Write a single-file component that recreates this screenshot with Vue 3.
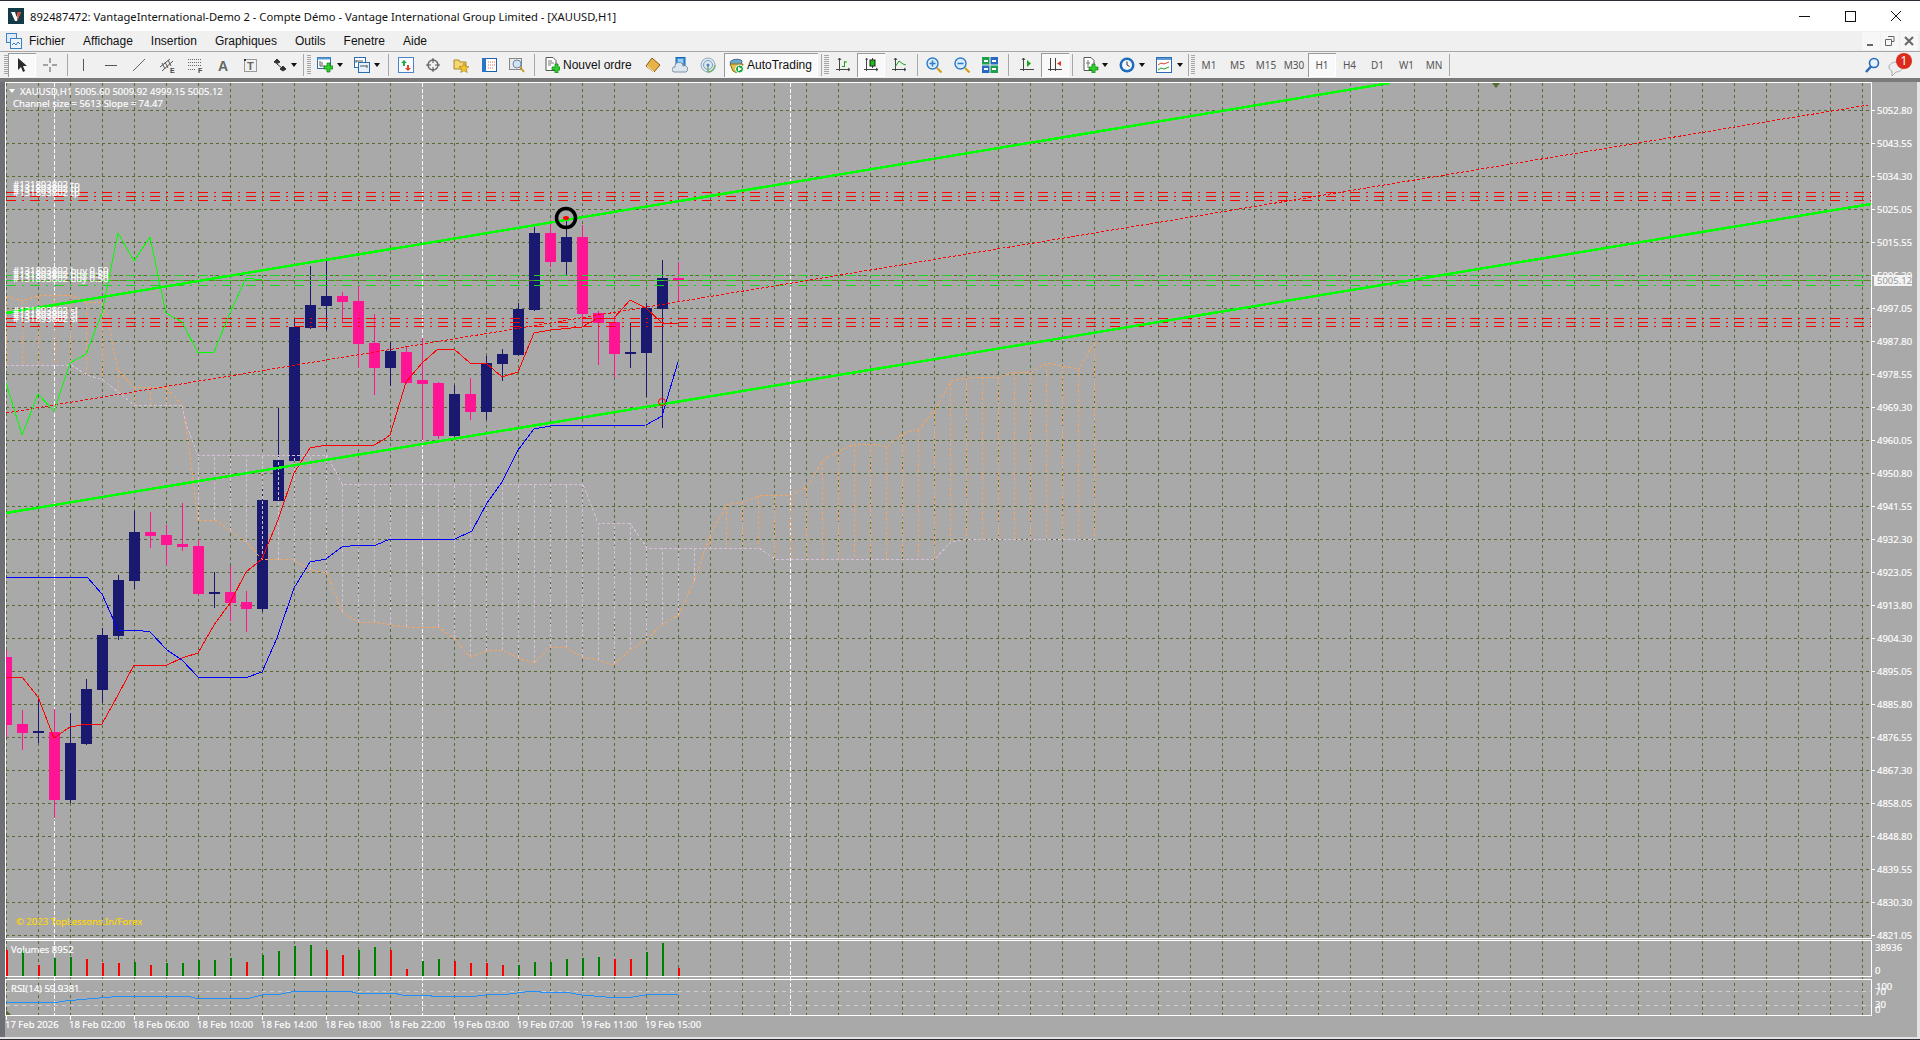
<script setup>
const menus = ['Fichier', 'Affichage', 'Insertion', 'Graphiques', 'Outils', 'Fenetre', 'Aide'];

// toolbar icons, 16x16 box
const icons = {
  cursor: '<path d="M4 1v12l3-3 2 5 2-1-2-5h4z" fill="#2b2b2b"/>',
  cross: '<path d="M8 1v5M8 10v5M1 8h5M10 8h5" stroke="#555" fill="none"/>',
  vline: '<path d="M8.5 2v12" stroke="#555"/>',
  hline: '<path d="M2 8.5h12" stroke="#555"/>',
  trend: '<path d="M2 14L14 2" stroke="#666"/>',
  equi: '<path d="M1 10L11 2M3 14L14 4M3 6l3 6M6 5l3 6M9 3l3 6" stroke="#555" fill="none"/><text x="11" y="16" font-size="7" font-weight="700" font-family="Liberation Sans" fill="#444">E</text>',
  fibo: '<path d="M1 2.5h13M1 5.5h13M1 8.5h13M1 12.5h8" stroke="#666" stroke-dasharray="1 1"/><text x="11" y="16" font-size="7" font-weight="700" font-family="Liberation Sans" fill="#444">F</text>',
  letter: '<text x="3" y="14" font-size="14" font-weight="700" font-family="Liberation Sans" fill="#666">A</text>',
  textbox: '<rect x="1.5" y="2.5" width="12" height="12" fill="none" stroke="#444" stroke-dasharray="1 1"/><path d="M1 2h2v2H1z" fill="#333"/><text x="4" y="13" font-size="11" font-weight="700" font-family="Liberation Sans" fill="#666">T</text>',
  arrows: '<path d="M5 2l3 3-3 1.5L2 5zM11 9l3 3-3 2-3-2zM5 7l5 4" fill="#333" stroke="#333"/>',
  newchart: '<rect x="0.5" y="0.5" width="13" height="11" fill="#fff" stroke="#2b6cb0"/><rect x="0.5" y="0.5" width="13" height="2" fill="#5b9bd5"/><path d="M3 4v5h5M5 5v3" stroke="#555" fill="none"/><path d="M8 6h3V3h3v3h3v3h-3v3h-3V9H8z" transform="translate(-1 3)" fill="#2fd12f" stroke="#0a7a0a" stroke-width=".7"/>',
  profile: '<rect x="0.5" y="0.5" width="11" height="10" fill="#fff" stroke="#2b6cb0"/><rect x="4.5" y="5.5" width="11" height="10" fill="#e6f0fa" stroke="#2b6cb0"/><path d="M2 4h7M6 9h7M2 3v3M13 8v3" stroke="#555" fill="none"/>',
  market: '<rect x="0.5" y="0.5" width="15" height="15" fill="#f7fbff" stroke="#4a86c5"/><path d="M6 3l3 3H7v3H5V6H3z" fill="#1fae3a"/><path d="M10 14l3-3h-2V8H9v3H7z" fill="#e2452b"/>',
  target: '<circle cx="8" cy="8" r="5" fill="none" stroke="#666" stroke-width="1.4"/><path d="M8 1v5M8 10v5M1 8h5M10 8h5" stroke="#555"/>',
  folder: '<path d="M1 3h5l1 2h6v7H1z" fill="#f4d774" stroke="#a98a1e"/><path d="M11 6l1.5 3.3 3.5.4-2.6 2.3.8 3.5-3.2-1.8-3.2 1.8.8-3.5L6 9.7l3.5-.4z" fill="#f2c230" stroke="#a07a10" stroke-width=".6"/>',
  navigator: '<rect x="1.5" y="1.5" width="14" height="13" fill="#fff" stroke="#1d62ad"/><rect x="1" y="1" width="4" height="14" fill="#2a75c7"/><path d="M7 5h7M7 8h7M7 11h5" stroke="#e46a5c" stroke-dasharray="1 1"/>',
  tester: '<rect x="0.5" y="1.5" width="12" height="11" fill="#e9e9e9" stroke="#888"/><circle cx="8" cy="7" r="4" fill="#cfe2f3" stroke="#6c8ba8"/><path d="M11 10l4 5" stroke="#c99a1e" stroke-width="2"/>',
  order: '<path d="M2 .5h7l3 3v10H2z" fill="#fff" stroke="#555"/><path d="M4 4h4M4 6h6M4 8h3" stroke="#777"/><path d="M8 10h3V7h3v3h2v3h-2v3h-3v-3H8z" fill="#2fd12f" stroke="#0a7a0a" stroke-width=".7"/>',
  book: '<path d="M7 1l8 7-6 7-8-6z" fill="#e8b44a" stroke="#8a5a16"/><path d="M2 9l7 6" stroke="#fff4c8"/>',
  cloud: '<rect x="4" y="0.5" width="9" height="9" fill="#3f9be8" stroke="#1d62ad"/><path d="M6 3h5M6 5h5" stroke="#fff"/><path d="M2 15a2.5 2.5 0 0 1 1-5 4 4 0 0 1 8-1 3 3 0 0 1 3 6z" fill="#dde6ee" stroke="#7c8ea3"/>',
  signal: '<circle cx="8" cy="8" r="7" fill="#dfe7ee" stroke="#8fa8bf"/><circle cx="8" cy="8" r="4.5" fill="none" stroke="#7a9ec4"/><path d="M8 8v7c4 0 7-3 7-7" fill="none" stroke="#6fb36f" stroke-width="1.5"/><circle cx="8" cy="8" r="1.5" fill="#4a86c5"/>',
  auto: '<path d="M2 6c0-4 10-5 12-2l-1 4-2 1H5z" fill="#6fa7c9" stroke="#3d6e8e"/><path d="M2 7h13l-2 7-4 2-4-2z" fill="#e5c04a" stroke="#8a6d14"/><circle cx="11.5" cy="12" r="4" fill="#11a63c" stroke="#fff"/><path d="M10 9.5l4 2.500-4 2.500z" fill="#fff"/>',
  bars: '<path d="M4.5 1v13M1 12.5h14M3 3l1.500-2 1.500 2M13 11l2 1.500-2 1.500" stroke="#444" fill="none"/><path d="M9.5 4v6M7 9.500h2.500M9.500 5H12" stroke="#1aa41a" fill="none"/>',
  candles: '<path d="M3.5 1v13M1 12.5h14M3 3l.5-2 1 2M13 11l2 1.500-2 1.500M9.500 1v10" stroke="#444" fill="none"/><rect x="7" y="3" width="5" height="6" fill="#15c415" stroke="#222"/>',
  line: '<path d="M4.5 1v13M1 12.5h14M3 3l1.500-2 1.500 2M13 11l2 1.500-2 1.500" stroke="#444" fill="none"/><path d="M4 10l4-6 4 3 3 1" stroke="#1aa41a" fill="none"/>',
  zoomin: '<circle cx="6.5" cy="6.5" r="5.5" fill="#d8ecfb" stroke="#2e7cc4" stroke-width="1.4"/><path d="M3.500 6.500h6M6.500 3.500v6" stroke="#2e7cc4" stroke-width="1.5"/><path d="M11 11l4.500 4.500" stroke="#d39e1c" stroke-width="2.2"/>',
  zoomout: '<circle cx="6.5" cy="6.5" r="5.5" fill="#d8ecfb" stroke="#2e7cc4" stroke-width="1.4"/><path d="M3.500 6.500h6" stroke="#2e7cc4" stroke-width="1.5"/><path d="M11 11l4.500 4.500" stroke="#d39e1c" stroke-width="2.2"/>',
  tile: '<rect x="0" y="0" width="7.5" height="7.5" fill="#1f9e4b"/><rect x="8.5" y="0" width="7.5" height="7.5" fill="#2769c4"/><rect x="0" y="8.5" width="7.5" height="7.5" fill="#2769c4"/><rect x="8.5" y="8.5" width="7.5" height="7.5" fill="#1f9e4b"/><path d="M2 3h4v2H2zM10 3h4v2h-4zM2 11h4v2H2zM10 11h4v2h-4z" fill="#fff"/>',
  scroll: '<path d="M4.5 1v13M1 12.5h14M3 3l1.500-2 1.500 2" stroke="#444" fill="none"/><path d="M8 3v7l4-3.500z" fill="#1aa41a"/>',
  shift: '<path d="M3.5 1v13M1 12.5h14M8.500 1v13" stroke="#444" fill="none"/><path d="M14 4v5l-4-2.500z" fill="#dc3a20"/>',
  template: '<path d="M1 .5h7l3 3v10H1z" fill="#fff" stroke="#555"/><path d="M3 6h4M5 3v8" stroke="#777"/><path d="M6 10h3V7h3v3h3v3h-3v3H9v-3H6z" fill="#2fd12f" stroke="#0a7a0a" stroke-width=".7"/>',
  clock: '<circle cx="8" cy="8" r="7.5" fill="#1c6cbd"/><circle cx="8" cy="8" r="5" fill="#f3f7fb"/><path d="M8 4.500V8l2.500 1.500" stroke="#333" fill="none"/>',
  indicators: '<rect x="0.5" y="0.5" width="15" height="15" fill="#fff" stroke="#2b6cb0"/><rect x="1" y="1" width="14" height="2" fill="#5b9bd5"/><path d="M2 8l3-2 3 1 5-2" stroke="#d8452c" fill="none"/><path d="M2 13l3-2 3 1 5-2" stroke="#1aa41a" fill="none"/>',
};

const tools = [
  { k: 'grip', w: 4 }, { k: 'btn', w: 28, icon: 'cursor', on: true }, { k: 'btn', w: 28, icon: 'cross' }, { k: 'sep', w: 5 },
  { k: 'btn', w: 28, icon: 'vline' }, { k: 'btn', w: 28, icon: 'hline' }, { k: 'btn', w: 28, icon: 'trend' }, { k: 'btn', w: 28, icon: 'equi' },
  { k: 'btn', w: 28, icon: 'fibo' }, { k: 'btn', w: 28, icon: 'letter' }, { k: 'btn', w: 28, icon: 'textbox' },
  { k: 'dd', w: 34, icon: 'arrows', pad: 7, gap: 3 }, { k: 'sep', w: 8 }, { k: 'grip', w: 4 },
  { k: 'dd', w: 34, icon: 'newchart', pad: 6, gap: 4 }, { k: 'dd', w: 38, icon: 'profile', pad: 9, gap: 4 }, { k: 'sep', w: 9 },
  { k: 'btn', w: 27, icon: 'market' }, { k: 'btn', w: 28, icon: 'target' }, { k: 'btn', w: 28, icon: 'folder' },
  { k: 'btn', w: 28, icon: 'navigator' }, { k: 'btn', w: 28, icon: 'tester' }, { k: 'sep', w: 6 },
  { k: 'txt', w: 103, icon: 'order', pad: 7, text: 'Nouvel ordre' }, { k: 'btn', w: 26, icon: 'book' }, { k: 'btn', w: 28, icon: 'cloud' },
  { k: 'btn', w: 28, icon: 'signal' }, { k: 'gap', w: 2 }, { k: 'txt', w: 94, icon: 'auto', pad: 4, text: 'AutoTrading', on: true }, { k: 'sep', w: 6 },
  { k: 'grip', w: 5 }, { k: 'btn', w: 28, icon: 'bars' }, { k: 'btn', w: 28, icon: 'candles', on: true }, { k: 'btn', w: 28, icon: 'line' }, { k: 'sep', w: 8 },
  { k: 'btn', w: 26, icon: 'zoomin' }, { k: 'btn', w: 30, icon: 'zoomout' }, { k: 'btn', w: 26, icon: 'tile' }, { k: 'sep', w: 10 },
  { k: 'btn', w: 28, icon: 'scroll' }, { k: 'btn', w: 28, icon: 'shift', on: true }, { k: 'sep', w: 6 },
  { k: 'dd', w: 34, icon: 'template', pad: 8, gap: 3 }, { k: 'dd', w: 37, icon: 'clock', pad: 10, gap: 4 }, { k: 'dd', w: 39, icon: 'indicators', pad: 10, gap: 5 }, { k: 'sep', w: 6 },
  { k: 'grip', w: 4 },
  { k: 'tf', w: 28, text: 'M1' }, { k: 'tf', w: 29, text: 'M5' }, { k: 'tf', w: 28, text: 'M15' }, { k: 'tf', w: 28, text: 'M30' },
  { k: 'tf', w: 28, text: 'H1', on: true }, { k: 'tf', w: 27, text: 'H4' }, { k: 'tf', w: 29, text: 'D1' }, { k: 'tf', w: 29, text: 'W1' }, { k: 'tf', w: 26, text: 'MN' },
  { k: 'sep', w: 4 },
];

// chart: coordinates are page pixels, the svg viewBox starts at y=82
const L = 6, R = 1871, TOP = 83, BOT = 938;

const vGrid = [];
for (let x = L; x <= R; x += 32) vGrid.push(x);

const prices = ['5052.80', '5043.55', '5034.30', '5025.05', '5015.55', '5006.30', '4997.05', '4987.80', '4978.55', '4969.30', '4960.05', '4950.80', '4941.55',
  '4932.30', '4923.05', '4913.80', '4904.30', '4895.05', '4885.80', '4876.55', '4867.30', '4858.05', '4848.80', '4839.55', '4830.30', '4821.05'];
const priceRows = prices.map((p, i) => ({ p, y: 110 + 33 * i }));

const times = ['17 Feb 2026', '18 Feb 02:00', '18 Feb 06:00', '18 Feb 10:00', '18 Feb 14:00', '18 Feb 18:00', '18 Feb 22:00', '19 Feb 03:00', '19 Feb 07:00', '19 Feb 11:00', '19 Feb 15:00'];

// b = bull (navy), s = bear (pink): type, body top, body bottom, wick top, wick bottom
const raw = [
  ['s', 657, 725, 650, 737], ['s', 724, 733, 710, 750], ['b', 731, 733, 700, 743], ['s', 732, 800, 709, 818], ['b', 743, 800, 713, 803],
  ['b', 689, 744, 679, 745], ['b', 635, 690, 628, 703], ['b', 580, 636, 575, 640], ['b', 532, 581, 511, 589], ['s', 532, 536, 512, 548],
  ['s', 535, 545, 525, 565], ['s', 544, 547, 503, 551], ['s', 546, 594, 539, 595], ['b', 592, 594, 572, 608], ['s', 592, 603, 566, 621],
  ['s', 602, 609, 591, 632], ['b', 500, 609, 488, 612], ['b', 460, 501, 408, 501], ['b', 327, 461, 318, 461], ['b', 305, 328, 266, 329],
  ['b', 296, 306, 261, 330], ['s', 296, 302, 292, 322], ['s', 301, 344, 286, 368], ['s', 343, 368, 314, 395], ['b', 351, 368, 342, 386],
  ['s', 352, 383, 346, 384], ['s', 380, 384, 338, 440], ['s', 383, 436, 382, 439], ['b', 394, 436, 385, 438], ['s', 394, 412, 378, 420],
  ['b', 363, 412, 356, 420], ['b', 354, 364, 349, 381], ['b', 309, 355, 303, 356], ['b', 233, 310, 227, 311], ['s', 233, 262, 220, 267],
  ['b', 237, 262, 220, 276], ['s', 237, 314, 225, 325], ['s', 313, 323, 311, 365], ['s', 322, 354, 316, 378], ['b', 352, 354, 323, 368],
  ['b', 308, 353, 303, 397], ['b', 278, 309, 260, 428], ['s', 278, 281, 262, 302],
];
const candles = raw.map((c, i) => ({ x: L + i * 16, bear: c[0] === 's', top: c[1], bot: c[2], wt: c[3], wb: c[4] }));

const pts = (a) => a.map((p) => p.join(',')).join(' ');

const tenkan = pts([[6, 677], [22, 677], [38, 697], [54, 738], [70, 727], [87, 724], [102, 724], [118, 695], [134, 665], [167, 665], [182, 658], [198, 653], [214, 625], [230, 603], [246, 572], [262, 559], [278, 520], [294, 473], [310, 448], [326, 445], [374, 445], [383, 440], [390, 435], [400, 402], [406, 382], [422, 363], [438, 349], [454, 349], [470, 363], [486, 363], [502, 377], [518, 372], [534, 333], [550, 330], [582, 327], [598, 318], [614, 318], [630, 300], [646, 308], [662, 323], [678, 323]]);
const kijun = pts([[6, 577], [87, 577], [102, 594], [118, 630], [143, 631], [150, 632], [167, 650], [182, 660], [198, 677], [248, 677], [262, 672], [277, 638], [294, 588], [310, 562], [326, 559], [342, 547], [358, 545], [376, 545], [390, 539], [455, 539], [472, 531], [487, 503], [502, 482], [518, 450], [534, 429], [550, 426], [646, 425], [662, 416], [678, 362]]);
const chikou = pts([[6, 383], [22, 435], [38, 394], [54, 411], [70, 363], [86, 354], [102, 313], [118, 233], [134, 261], [150, 237], [166, 313], [182, 322], [198, 353], [214, 352], [230, 313], [246, 278], [262, 280]]);

const spanA = [[6, 296], [22, 301], [38, 296], [54, 295], [70, 295], [86, 302], [102, 303], [108, 320], [118, 370], [134, 387], [166, 387], [182, 405], [188, 440], [198, 520], [215, 520], [247, 543], [262, 559], [293, 560], [310, 570], [327, 573], [342, 612], [358, 622], [374, 622], [390, 625], [407, 627], [438, 627], [453, 637], [470, 657], [487, 651], [502, 650], [518, 658], [534, 663], [550, 647], [567, 648], [582, 657], [598, 660], [613, 665], [630, 650], [647, 640], [660, 626], [679, 615], [695, 579], [711, 533], [727, 505], [743, 502], [759, 496], [775, 495], [791, 495], [807, 487], [823, 460], [839, 451], [855, 444], [871, 444], [887, 447], [903, 433], [919, 429], [935, 410], [951, 381], [967, 378], [983, 377], [999, 377], [1015, 372], [1031, 372], [1047, 363], [1063, 366], [1079, 369], [1095, 341]];
const spanB = [[6, 365], [71, 365], [87, 375], [103, 380], [118, 392], [134, 405], [182, 405], [187, 427], [198, 455], [327, 455], [342, 484], [583, 484], [598, 523], [630, 523], [647, 548], [759, 548], [775, 559], [935, 559], [951, 542], [967, 539], [1095, 539]];

function at(line, x) {
  for (let i = 1; i < line.length; i++) {
    if (x <= line[i][0]) {
      const [x0, y0] = line[i - 1], [x1, y1] = line[i];
      return y0 + (y1 - y0) * (x - x0) / (x1 - x0);
    }
  }
  return line[line.length - 1][1];
}

const hatch = [];
for (let x = L; x <= 1095; x += 16) {
  const a = at(spanA, x), b = at(spanB, x);
  hatch.push({ x: x + 0.5, a, b, orange: a < b });
}
const spanAPts = pts(spanA), spanBPts = pts(spanB);

const levels = [192, 196, 200, 318, 322, 326];
const greens = [275, 285];

const vols = [[950, 1], [950, 0], [965, 1], [958, 0], [957, 0], [959, 1], [963, 1], [963, 1], [962, 0], [965, 1], [963, 0], [963, 0], [960, 0], [960, 0], [958, 0], [962, 1], [955, 0], [951, 0], [946, 0], [945, 0], [950, 1], [955, 1], [950, 0], [947, 0], [950, 1], [969, 1], [961, 0], [959, 0], [961, 1], [963, 1], [963, 1], [965, 1], [965, 0], [962, 0], [962, 0], [959, 0], [958, 0], [957, 0], [959, 1], [959, 1], [952, 0], [943, 0], [968, 1]]
  .map((v, i) => ({ x: L + i * 16, y: v[0], red: !!v[1] }));

const rsi = pts([[6, 1002], [48, 1002], [54, 1003], [65, 1001], [87, 999], [111, 997], [127, 996], [187, 996], [195, 998], [250, 998], [262, 995], [281, 994], [296, 991], [349, 991], [356, 993], [368, 994], [383, 993], [393, 993], [402, 995], [427, 995], [436, 997], [446, 996], [477, 996], [485, 995], [509, 994], [533, 991], [548, 993], [565, 992], [582, 995], [606, 997], [633, 997], [645, 995], [655, 994], [669, 994], [678, 995]]);

const tradeLabels = [
  { x: 13, ys: [188, 192, 196], text: '#131893802 tp' },
  { x: 13, ys: [274, 278, 282], text: '#131893802 buy 0.50' },
  { x: 13, ys: [314, 318, 322], text: '#131893802 sl' },
];
</script>

<template>
  <div class="terminal">
    <header class="titlebar">
      <svg class="app-logo" width="16" height="16" viewBox="0 0 16 16"><rect width="16" height="16" fill="#123b47"/><path d="M3 4h4l1.500 5L10 4h3l-4 9H7z" fill="#fff"/><path d="M9.500 4H13l-4 9z" fill="#d9412c"/></svg>
      <span class="title-text">892487472: VantageInternational-Demo 2 - Compte Démo - Vantage International Group Limited - [XAUUSD,H1]</span>
      <div class="win-controls">
        <svg width="16" height="16" viewBox="0 0 16 16"><path d="M3 8.500h11" stroke="#111"/></svg>
        <svg width="16" height="16" viewBox="0 0 16 16"><rect x="3.500" y="3.500" width="10" height="10" fill="none" stroke="#111"/></svg>
        <svg width="16" height="16" viewBox="0 0 16 16"><path d="M3 3l10 10M13 3L3 13" stroke="#111"/></svg>
      </div>
    </header>

    <nav class="menubar">
      <svg class="menu-icon" width="16" height="16" viewBox="0 0 16 16"><rect x="0.500" y="0.500" width="10" height="9" fill="#dcebfa" stroke="#3f7fc1"/><rect x="4.500" y="5.500" width="11" height="10" fill="#eef5fc" stroke="#3f7fc1"/><path d="M6 12l2-2 2 2 2-3 2 2" stroke="#3f7fc1" fill="none"/></svg>
      <span v-for="m in menus" :key="m" class="menu-item">{{ m }}</span>
      <div class="mdi-buttons">
        <span class="mdi"><svg width="10" height="10" viewBox="0 0 10 10"><path d="M1 8h6v2H1z" fill="#666"/></svg></span>
        <span class="mdi"><svg width="10" height="10" viewBox="0 0 10 10"><path d="M3 .5h6v5H7M.5 3.500h6v6h-6z" fill="none" stroke="#666"/></svg></span>
        <span class="mdi"><svg width="10" height="10" viewBox="0 0 10 10"><path d="M1 1l8 8M9 1L1 9" stroke="#666" stroke-width="2"/></svg></span>
      </div>
    </nav>

    <div class="toolbar">
      <template v-for="(t, i) in tools" :key="i">
        <span v-if="t.k === 'grip'" class="grip" :style="{ width: t.w + 'px' }"></span>
        <span v-else-if="t.k === 'sep'" class="sep" :style="{ width: t.w + 'px' }"></span>
        <span v-else-if="t.k === 'gap'" :style="{ width: t.w + 'px' }"></span>
        <span v-else-if="t.k === 'tf'" class="btn tf" :class="{ on: t.on }" :style="{ width: t.w + 'px' }">{{ t.text }}</span>
        <span v-else-if="t.k === 'txt'" class="btn txt" :class="{ on: t.on }" :style="{ width: t.w + 'px', paddingLeft: t.pad + 'px' }">
          <svg class="ico" width="16" height="16" viewBox="0 0 16 16" v-html="icons[t.icon]"></svg>
          <span>{{ t.text }}</span>
        </span>
        <span v-else-if="t.k === 'dd'" class="btn dd" :style="{ width: t.w + 'px', paddingLeft: t.pad + 'px' }">
          <svg class="ico" width="16" height="16" viewBox="0 0 16 16" v-html="icons[t.icon]"></svg>
          <i class="caret" :style="{ marginLeft: t.gap + 'px' }"></i>
        </span>
        <span v-else class="btn" :class="{ on: t.on }" :style="{ width: t.w + 'px' }">
          <svg class="ico" width="16" height="16" viewBox="0 0 16 16" v-html="icons[t.icon]"></svg>
        </span>
      </template>
      <div class="tool-right">
        <svg width="16" height="16" viewBox="0 0 16 16"><circle cx="10" cy="6" r="4.500" fill="#e8f2fb" stroke="#2467b8" stroke-width="1.600"/><path d="M7 9.500L2 15" stroke="#2467b8" stroke-width="2.400"/></svg>
        <span class="alert">
          <svg class="bubble" width="16" height="16" viewBox="0 0 16 16"><path d="M1 6c0-3 4-5 7-5s7 2 7 5-4 5-7 5l-4 4v-5C2 9 1 8 1 6z" fill="#eee" stroke="#aaa"/></svg>
          <b class="badge">1</b>
        </span>
      </div>
    </div>

    <div class="chart-frame">
      <svg class="chart" width="1920" height="958" viewBox="0 82 1920 958">
        <defs>
          <clipPath id="main"><rect :x="L" :y="TOP" :width="R - L" :height="BOT - TOP" /></clipPath>
        </defs>

        <!-- grid -->
        <g class="grid" shape-rendering="crispEdges">
          <line v-for="x in vGrid" :key="'v' + x" :x1="x + 0.5" :x2="x + 0.5" y1="83" y2="1016" />
          <line v-for="r in priceRows" :key="'h' + r.y" :x1="L" :x2="R" :y1="r.y + 0.5" :y2="r.y + 0.5" />
          <line :x1="L" :x2="R" y1="976.5" y2="976.5" />
          <line :x1="L" :x2="R" y1="1015.5" y2="1015.5" />
        </g>
        <g class="sep-day" shape-rendering="crispEdges">
          <line v-for="x in [54, 422, 790]" :key="x" :x1="x + 0.5" :x2="x + 0.5" y1="83" y2="1016" />
        </g>

        <!-- candles -->
        <g clip-path="url(#main)" shape-rendering="crispEdges">
          <g v-for="c in candles" :key="c.x" :fill="c.bear ? '#ff1493' : '#191970'">
            <rect :x="c.x" :y="c.wt" width="1" :height="c.wb - c.wt" />
            <rect :x="c.x - 5" :y="c.top" width="11" :height="c.bot - c.top" />
          </g>
        </g>

        <!-- ichimoku cloud -->
        <g clip-path="url(#main)" shape-rendering="crispEdges" fill="none">
          <line v-for="h in hatch" :key="'c' + h.x" :class="h.orange ? 'span-a' : 'span-b'" :x1="h.x" :x2="h.x" :y1="h.a" :y2="h.b" />
          <polyline class="span-a" :points="spanAPts" />
          <polyline class="span-b" :points="spanBPts" />
        </g>

        <!-- lines -->
        <g clip-path="url(#main)" shape-rendering="crispEdges" fill="none">
          <line v-for="y in levels" :key="'l' + y" class="level red" :x1="L" :x2="R" :y1="y + 0.5" :y2="y + 0.5" />
          <line v-for="y in greens" :key="'g' + y" class="level green" :x1="L" :x2="R" :y1="y + 0.5" :y2="y + 0.5" />
          <line class="bid" :x1="L" :x2="R" y1="280.5" y2="280.5" />
          <line class="level green" :x1="L" :x2="R" y1="280.5" y2="280.5" />
          <line class="channel" x1="6" y1="413" x2="1868" y2="105" />
          <polyline class="tenkan" :points="tenkan" />
          <polyline class="kijun" :points="kijun" />
          <polyline class="chikou" :points="chikou" />
          <line class="thick" x1="6" y1="313" x2="1390" y2="83" />
          <line class="thick" x1="6" y1="513" x2="1871" y2="204" />
        </g>

        <!-- markers -->
        <circle cx="566" cy="218" r="9.5" fill="none" stroke="#000" stroke-width="3.5" />
        <ellipse cx="566" cy="218" rx="3" ry="2" fill="#f00" />
        <circle cx="662" cy="402" r="3.5" fill="none" stroke="#f00" />
        <path d="M1492 83h8l-4 5z" fill="#556b2f" />
        <path d="M6 1010l5 5H6z" fill="#556b2f" />

        <!-- RSI levels and volumes -->
        <g shape-rendering="crispEdges">
          <line class="rsi-level" :x1="L" :x2="R" y1="991.5" y2="991.5" />
          <line class="rsi-level" :x1="L" :x2="R" y1="1005.5" y2="1005.5" />
          <rect v-for="v in vols" :key="'b' + v.x" :x="v.x" :y="v.y" width="2" :height="976 - v.y" :fill="v.red ? '#f00' : '#008000'" />
          <polyline class="rsi" :points="rsi" />
        </g>

        <!-- frames -->
        <g class="frames" shape-rendering="crispEdges">
          <rect x="0" y="82" width="5" height="955" fill="#6e7076" stroke="none" />
          <rect x="5.5" y="82.5" :width="R - 5" height="856" />
          <rect x="5.5" y="940.5" :width="R - 5" height="36" />
          <rect x="5.5" y="979.5" :width="R - 5" height="36" />
          <line v-for="r in priceRows" :key="'t' + r.y" :x1="R + 1" :x2="R + 4" :y1="r.y + 0.5" :y2="r.y + 0.5" />
          <line v-for="(t, i) in times" :key="'x' + i" :x1="L + i * 64 + 0.5" :x2="L + i * 64 + 0.5" y1="1016" y2="1020" />
          <rect x="1917" y="82" width="3" height="958" fill="#e4e4e4" stroke="none" />
          <rect x="0" y="1037" width="1920" height="2" fill="#e4e4e4" stroke="none" />
          <rect x="0" y="1039" width="1920" height="1" fill="#2a2d33" stroke="none" />
        </g>

        <!-- texts -->
        <g class="labels">
          <path d="M9 89h6l-3 4z" fill="#fff" />
          <text x="20" y="95" xml:space="preserve">XAUUSD,H1  5005.60 5009.92 4999.15 5005.12</text>
          <text x="13" y="107">Channel size = 5613 Slope = 74.47</text>
          <g v-for="t in tradeLabels" :key="t.text">
            <text v-for="y in t.ys" :key="y" :x="t.x" :y="y">{{ t.text }}</text>
          </g>
          <text class="brand" x="16" y="925">© 2023 TopLessons.In/Forex</text>
          <text x="11" y="953">Volumes 8952</text>
          <text x="11" y="992">RSI(14) 59.9381</text>
          <text v-for="r in priceRows" :key="r.p" x="1877" :y="r.y + 3.5">{{ r.p }}</text>
          <rect x="1874" y="275" width="38" height="11" fill="#f2f2f2" />
          <text class="last" x="1877" y="284">5005.12</text>
          <text x="1875" y="951">38936</text>
          <text x="1875" y="974">0</text>
          <text x="1876" y="990">100</text>
          <text x="1875" y="995">70</text>
          <text x="1875" y="1008">30</text>
          <text x="1875" y="1013">0</text>
          <text v-for="(t, i) in times" :key="t" :x="L - 1 + i * 64" y="1028">{{ t }}</text>
        </g>
      </svg>
    </div>
  </div>
</template>

<style scoped>
.terminal { width: 1920px; height: 1040px; overflow: hidden; display: flex; flex-direction: column; font-family: "Noto Sans", "Liberation Sans", sans-serif; background: #f0f0f0; color: #111; }

.titlebar { flex: 0 0 31px; box-sizing: border-box; display: flex; align-items: center; padding: 0 0 0 8px; background: #fff; border-top: 1px solid #2a2d33; }
.app-logo { margin-right: 6px; }
.title-text { font-size: 11.2px; white-space: nowrap; }
.win-controls { margin-left: auto; display: flex; align-items: center; gap: 30px; padding-right: 16px; }

.menubar { flex: 0 0 21px; box-sizing: border-box; display: flex; align-items: center; padding-left: 6px; background: #f0f0f0; border-bottom: 1px solid #a6a6a6; font-family: "Liberation Sans", sans-serif; font-size: 12px; }
.menu-icon { margin-right: 7px; }
.menu-item { margin-right: 18px; }
.mdi-buttons { margin-left: auto; display: flex; gap: 1px; padding-right: 2px; align-self: flex-start; padding-top: 1px; }
.mdi { width: 18px; height: 18px; display: flex; align-items: center; justify-content: center; background: #f7f7f7; }

.toolbar { flex: 0 0 30px; box-sizing: border-box; display: flex; align-items: center; padding-left: 4px; background: #f0f0f0; border-bottom: 4px solid #7b7b7b; height: 30px; }
.grip { height: 20px; background: repeating-linear-gradient(to bottom, #a5a5a5 0 1px, transparent 1px 2px); flex: none; }
.sep { height: 22px; flex: none; position: relative; }
.sep::after { content: ""; position: absolute; left: 50%; top: 0; bottom: 0; width: 1px; background: #a8a8a8; }
.btn { flex: none; box-sizing: border-box; height: 24px; display: flex; align-items: center; justify-content: center; }
.btn.on { background: #f9f9f9; box-shadow: inset 1px 1px 0 #9a9a9a, inset -1px -1px 0 #fff; }
.ico { flex: none; }
.dd { justify-content: flex-start; }
.caret { width: 0; height: 0; border-left: 3px solid transparent; border-right: 3px solid transparent; border-top: 4px solid #111; }
.txt { justify-content: flex-start; gap: 3px; font-family: "Liberation Sans", sans-serif; font-size: 12px; white-space: nowrap; }
.tf { font-size: 10px; color: #555; }
.tool-right { margin-left: auto; display: flex; align-items: center; gap: 8px; padding-right: 8px; }
.alert { position: relative; width: 24px; height: 24px; }
.bubble { position: absolute; left: 0; bottom: 0; }
.badge { position: absolute; right: 0; top: 0; width: 16px; height: 16px; border-radius: 50%; background: #dc2a1c; color: #fff; font-size: 12px; font-weight: 400; line-height: 16px; text-align: center; }

.chart-frame { flex: 1; min-height: 0; background: #a9a9a9; }
.chart { display: block; }

.grid line { stroke: #556b2f; stroke-dasharray: 3 3; }
.sep-day line { stroke: #fff; stroke-dasharray: 4 2; }
.span-a { stroke: #f4a460; stroke-dasharray: 3 2; }
.span-b { stroke: #d8bfd8; stroke-dasharray: 3 2; }
.level { stroke-dasharray: 10 6 2 6; }
.red { stroke: #f00; }
.green { stroke: #1fd21f; }
.bid { stroke: #6b7a30; }
.channel { stroke: #f00; stroke-dasharray: 3 2; }
.tenkan { stroke: #f00; }
.kijun { stroke: #00f; }
.chikou { stroke: #0f0; }
.thick { stroke: #0f0; stroke-width: 2.5; }
.rsi { stroke: #1e90ff; fill: none; }
.rsi-level { stroke: #cfcfcf; stroke-dasharray: 4 4; }
.frames { fill: none; stroke: #fff; }

.labels text { font-size: 9.5px; fill: #fff; stroke: #fff; stroke-width: 0.15; white-space: pre; }
.labels .brand { fill: #ffd700; stroke: #ffd700; }
.labels .last { fill: #999; stroke: none; }
</style>

<style>
html, body { margin: 0; overflow: hidden; }
</style>
